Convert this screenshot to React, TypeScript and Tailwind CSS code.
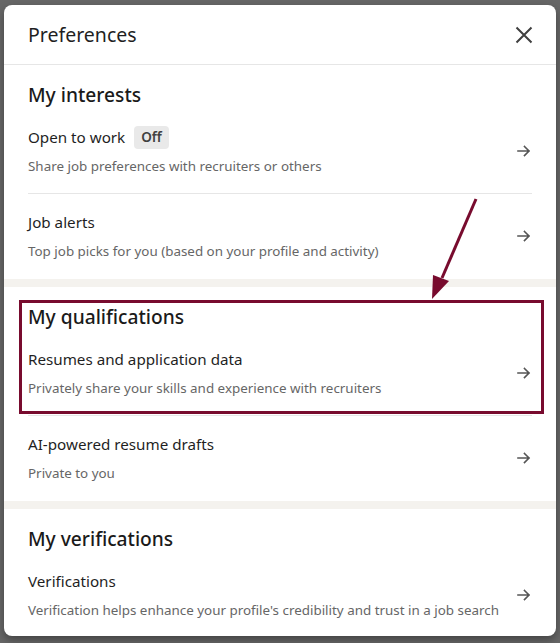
import React from "react";

const font = { fontFamily: '"Noto Sans", "Open Sans", sans-serif' };

function Arrow() {
  return (
    <svg width="16" height="16" viewBox="0 0 16 16" className="shrink-0 text-[#555]">
      <path d="M2 8h11M8.5 3.5L13 8l-4.5 4.5" fill="none" stroke="currentColor" strokeWidth="1.6" strokeLinecap="square" />
    </svg>
  );
}

type ItemProps = { title: string; sub: string; badge?: string; last?: boolean };

function Item({ title, sub, badge, last }: ItemProps) {
  return (
    <div className={`flex items-center justify-between pt-4 ${last ? "pb-[18px]" : "pb-[17px] border-b border-[#e6e6e6]"}`}>
      <div className="flex flex-col">
        <div className="flex items-center gap-2 h-6">
          <span className="text-[15.2px] leading-6 text-[#1f1f1f]">{title}</span>
          {badge && (
            <span className="ml-[1px] rounded bg-[#e9e9e9] px-[7px] h-[23px] flex items-center text-[13.5px] font-semibold text-[#404040]">
              {badge}
            </span>
          )}
        </div>
        <span className="mt-[7px] text-[13.4px] leading-5 text-[#666666] whitespace-nowrap">{sub}</span>
      </div>
      <Arrow />
    </div>
  );
}

function Section({ heading, children }: { heading: string; children: React.ReactNode }) {
  return (
    <div className="px-6 pt-4 shrink-0">
      <h2 className="text-[19.2px] leading-7 font-medium text-[#1a1a1a]">{heading}</h2>
      {children}
    </div>
  );
}

export default function App() {
  return (
    <div className="relative w-[560px] h-[643px] overflow-hidden bg-[#676767] pt-[5px] px-[4px]" style={font}>
      <div className="relative w-[552px] h-[631px] bg-white rounded-lg shadow-[0_4px_8px_rgba(0,0,0,0.35)] flex flex-col overflow-hidden">
        <div className="h-[60px] shrink-0 flex items-center justify-between px-6 border-b border-[#e6e6e6]">
          <span className="text-[19.5px] text-[#1f1f1f]">Preferences</span>
          <svg width="24" height="24" viewBox="0 0 24 24" className="text-[#404040] mr-[-4px]">
            <path d="M4.5 4.5l15 15M19.5 4.5l-15 15" stroke="currentColor" strokeWidth="2" fill="none" />
          </svg>
        </div>
        <Section heading="My interests">
          <Item title="Open to work" badge="Off" sub="Share job preferences with recruiters or others" />
          <Item title="Job alerts" sub="Top job picks for you (based on your profile and activity)" last />
        </Section>
        <div className="h-2 shrink-0 bg-[#f4f2ee]" />
        <Section heading="My qualifications">
          <Item title="Resumes and application data" sub="Privately share your skills and experience with recruiters" />
          <Item title="AI-powered resume drafts" sub="Private to you" last />
        </Section>
        <div className="h-2 shrink-0 bg-[#f4f2ee]" />
        <Section heading="My verifications">
          <Item title="Verifications" sub="Verification helps enhance your profile's credibility and trust in a job search" last />
        </Section>
      </div>
      {/* annotation box */}
      <div className="absolute left-[19px] top-[300px] w-[525px] h-[114px] border-[3px] border-[#780b2e] pointer-events-none" />
      {/* annotation arrow */}
      <svg className="absolute left-0 top-0 pointer-events-none" width="560" height="643">
        <line x1="476" y1="199" x2="442" y2="278" stroke="#780b2e" strokeWidth="3" />
        <polygon points="432,299 433,275 449,281" fill="#780b2e" />
      </svg>
    </div>
  );
}
